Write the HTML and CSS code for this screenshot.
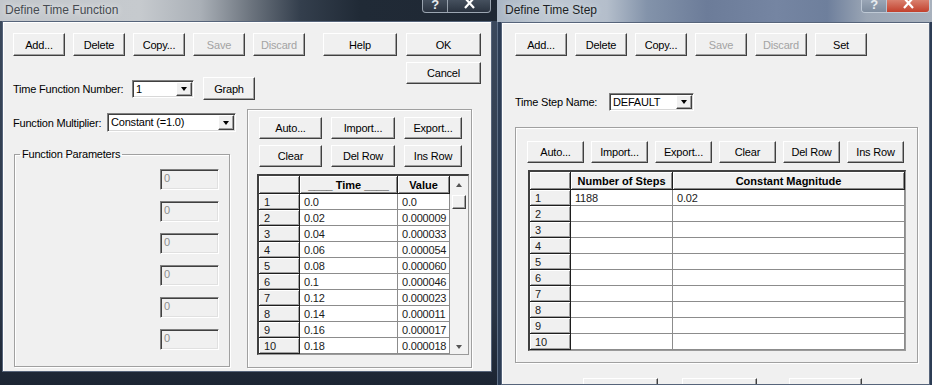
FILE: index.html
```html
<!DOCTYPE html>
<html lang="en">
<head>
  <meta charset="UTF-8">
  <meta name="viewport" content="width=device-width, initial-scale=1.0">
  <title>Define Time Function / Define Time Step</title>
  <link rel="stylesheet" href="styles.css">
</head>
<body>
<div class="desktop">

  <!-- Define Time Function dialog -->
  <div class="window win-function">
    <div class="titlebar">
      <span class="title">Define Time Function</span>
      <div class="caption">
        <span class="cap-btn cap-help">?</span>
        <span class="cap-btn cap-close">
          <svg width="11" height="9" viewBox="0 0 11 9"><path d="M1 -2 L10 8 M10 -2 L1 8" stroke="#fff" stroke-width="2.2"/></svg>
        </span>
      </div>
    </div>

    <div class="client fn-client">
      <div class="fn-top">
        <div class="fn-main">
          <div class="btn-row">
            <button class="btn">Add...</button>
            <button class="btn">Delete</button>
            <button class="btn">Copy...</button>
            <button class="btn" disabled>Save</button>
            <button class="btn" disabled>Discard</button>
            <button class="btn btn-help">Help</button>
          </div>
          <div class="field-row fn-number">
            <label class="lbl lbl-number">Time Function Number:</label>
            <div class="combo combo-number"><span class="combo-text">1</span><span class="combo-drop"></span></div>
            <button class="btn btn-graph">Graph</button>
          </div>
        </div>
        <div class="fn-side">
          <button class="btn btn-ok">OK</button>
          <button class="btn btn-ok btn-cancel">Cancel</button>
        </div>
      </div>

      <div class="fn-body">
        <div class="fn-left">
          <div class="field-row mult-row">
            <label class="lbl lbl-mult">Function Multiplier:</label>
            <div class="combo combo-mult"><span class="combo-text">Constant (=1.0)</span><span class="combo-drop"></span></div>
          </div>
          <fieldset class="group params">
            <legend>Function Parameters</legend>
            <div class="param">0</div>
            <div class="param">0</div>
            <div class="param">0</div>
            <div class="param">0</div>
            <div class="param">0</div>
            <div class="param">0</div>
          </fieldset>
        </div>

        <div class="group fn-table">
          <div class="tool-grid">
            <button class="btn">Auto...</button>
            <button class="btn">Import...</button>
            <button class="btn">Export...</button>
            <button class="btn">Clear</button>
            <button class="btn">Del Row</button>
            <button class="btn">Ins Row</button>
          </div>
          <div class="grid-frame fn-grid">
            <table class="grid">
              <colgroup><col style="width:41px"><col style="width:98px"><col style="width:52px"></colgroup>
              <tr><th></th><th>____ Time ____</th><th>Value</th></tr>
              <tr><td class="rh">1</td><td>0.0</td><td>0.0</td></tr>
              <tr><td class="rh">2</td><td>0.02</td><td>0.000009</td></tr>
              <tr><td class="rh">3</td><td>0.04</td><td>0.000033</td></tr>
              <tr><td class="rh">4</td><td>0.06</td><td>0.000054</td></tr>
              <tr><td class="rh">5</td><td>0.08</td><td>0.000060</td></tr>
              <tr><td class="rh">6</td><td>0.1</td><td>0.000046</td></tr>
              <tr><td class="rh">7</td><td>0.12</td><td>0.000023</td></tr>
              <tr><td class="rh">8</td><td>0.14</td><td>0.000011</td></tr>
              <tr><td class="rh">9</td><td>0.16</td><td>0.000017</td></tr>
              <tr><td class="rh">10</td><td>0.18</td><td>0.000018</td></tr>
            </table>
            <div class="vscroll">
              <span class="arrow-up"></span>
              <span class="thumb"></span>
              <span class="arrow-down"></span>
            </div>
          </div>
        </div>
      </div>
    </div>
  </div>

  <!-- Define Time Step dialog -->
  <div class="window win-step">
    <div class="titlebar">
      <span class="title">Define Time Step</span>
      <div class="caption">
        <span class="cap-btn cap-help">?</span>
        <span class="cap-btn cap-close">
          <svg width="11" height="9" viewBox="0 0 11 9"><path d="M1 -2 L10 8 M10 -2 L1 8" stroke="#fff" stroke-width="2.2"/></svg>
        </span>
      </div>
    </div>

    <div class="client step-client">
      <div class="btn-row">
        <button class="btn">Add...</button>
        <button class="btn">Delete</button>
        <button class="btn">Copy...</button>
        <button class="btn" disabled>Save</button>
        <button class="btn" disabled>Discard</button>
        <button class="btn">Set</button>
      </div>
      <div class="field-row name-row">
        <label class="lbl lbl-name">Time Step Name:</label>
        <div class="combo combo-name"><span class="combo-text">DEFAULT</span><span class="combo-drop"></span></div>
      </div>

      <div class="group step-group">
        <div class="tool-row">
          <button class="btn">Auto...</button>
          <button class="btn">Import...</button>
          <button class="btn">Export...</button>
          <button class="btn">Clear</button>
          <button class="btn">Del Row</button>
          <button class="btn">Ins Row</button>
        </div>
        <div class="grid-frame step-grid">
          <table class="grid">
            <colgroup><col style="width:41px"><col style="width:102px"><col style="width:232px"></colgroup>
            <tr><th></th><th>Number of Steps</th><th>Constant Magnitude</th></tr>
            <tr><td class="rh">1</td><td>1188</td><td>0.02</td></tr>
            <tr><td class="rh">2</td><td></td><td></td></tr>
            <tr><td class="rh">3</td><td></td><td></td></tr>
            <tr><td class="rh">4</td><td></td><td></td></tr>
            <tr><td class="rh">5</td><td></td><td></td></tr>
            <tr><td class="rh">6</td><td></td><td></td></tr>
            <tr><td class="rh">7</td><td></td><td></td></tr>
            <tr><td class="rh">8</td><td></td><td></td></tr>
            <tr><td class="rh">9</td><td></td><td></td></tr>
            <tr><td class="rh">10</td><td></td><td></td></tr>
          </table>
        </div>
      </div>

      <!-- dialog buttons, cut off by the bottom of the screen -->
      <div class="bottom-row">
        <button class="btn btn-ok"></button>
        <button class="btn btn-ok"></button>
        <button class="btn btn-ok"></button>
      </div>
    </div>
  </div>

</div>
</body>
</html>
```

FILE: styles.css
```css
* {
  box-sizing: border-box;
}

body {
  margin: 0;
  width: 932px;
  height: 385px;
  overflow: hidden;
  background: #1b2532;
  font-family: "Liberation Sans", Arial, sans-serif;
  font-size: 11px;
  letter-spacing: -0.2px;
  color: #000;
}

.desktop {
  display: flex;
  height: 385px;
}

/* Window frames */
.window {
  display: flex;
  flex-direction: column;
  height: 385px;
  overflow: hidden;
}

.win-function {
  width: 497px;
  background: linear-gradient(180deg, #3c4a5e 0%, #2a3546 80%, #1c2533 100%);
}

.win-step {
  width: 435px;
  background: linear-gradient(90deg, #8fa0b6 0, #2c3c54 1px, #2c3c54 100%);
}

.titlebar {
  display: flex;
  justify-content: space-between;
  align-items: flex-start;
  flex-shrink: 0;
}

.win-function .titlebar {
  height: 21px;
  padding-right: 6px;
  background: linear-gradient(90deg, #c3c7cc 0, #c6cace 140px, #aab0b7 200px, #6d757f 250px, #343f4d 300px, #202a36 360px, #1f2834 100%);
}

.win-step .titlebar {
  height: 22px;
  padding-right: 2px;
  background: linear-gradient(90deg, #aab6c4 0, #c0c9d3 50px, #b4becb 110px, #8393aa 150px, #6c7c99 210px, #7585a2 280px, #6e7f9c 330px, #9ba6b5 370px, #a8b1bd 100%);
}

.title {
  padding-top: 2px;
  font-size: 12px;
  letter-spacing: 0;
  line-height: 16px;
}

.win-function .title {
  padding-left: 5px;
  color: #464b51;
  text-shadow: 0 0 6px rgba(255, 255, 255, 0.9);
}

.win-step .title {
  padding-left: 8px;
  color: #1c1f24;
  text-shadow: 0 0 6px rgba(230, 238, 245, 0.9);
}

/* Caption buttons (top clipped by the screen edge) */
.caption {
  display: flex;
  height: 13px;
  border: 1px solid rgba(215, 225, 235, 0.6);
  border-top: none;
  border-radius: 0 0 4px 4px;
  overflow: hidden;
}

.cap-btn {
  display: flex;
  justify-content: center;
  align-items: flex-start;
  height: 12px;
  color: #e8ecf0;
  font-weight: bold;
  font-size: 13px;
  line-height: 9px;
}

.cap-help {
  width: 25px;
  border-right: 1px solid rgba(215, 225, 235, 0.6);
}

.cap-close {
  width: 42px;
}

.win-function .caption {
  background: linear-gradient(180deg, #45505e, #2a3340);
}

.win-step .cap-help {
  background: linear-gradient(180deg, #9aa6b6, #7e8c9e);
}

.win-step .cap-close {
  background: linear-gradient(180deg, #d9806e, #c2402c);
}

/* Client area */
.client {
  flex: 1;
  background: #f0f0f0;
  border: 1px solid #56647a;
  box-shadow: inset 1px 1px #ffffff;
  overflow: hidden;
}

.fn-client {
  margin: 0 5px 13px 2px;
  padding: 11px 0 0 10px;
}

.step-client {
  margin: 0 2px 0 4px;
  padding: 10px 0 0 13px;
}

/* Buttons */
.btn {
  display: block;
  height: 23px;
  width: 52px;
  padding: 0;
  margin: 0;
  font-family: inherit;
  font-size: 11px;
  letter-spacing: -0.2px;
  color: #000;
  background: #f0f0f0;
  border: 1px solid;
  border-color: #ffffff #404040 #404040 #ffffff;
  box-shadow: inset -1px -1px #a0a0a0;
  border-radius: 0;
}

.btn:disabled {
  color: #a3a3a3;
}

.btn-row {
  display: flex;
  gap: 8px;
}

.btn-help {
  width: 74px;
  margin-left: 10px;
}

.btn-ok {
  width: 75px;
}

.btn-cancel {
  height: 22px;
  margin-top: 6px;
}

.btn-graph {
  width: 52px;
  margin-left: 9px;
}

/* Labels and combos */
.field-row {
  display: flex;
  align-items: center;
}

.lbl {
  flex-shrink: 0;
}

.lbl-number {
  width: 119px;
}

.lbl-mult,
.lbl-name {
  width: 94px;
}

.combo {
  display: flex;
  height: 18px;
  padding: 1px;
  background: #fff;
  border: 1px solid;
  border-color: #808080 #ffffff #ffffff #808080;
  box-shadow: inset 1px 1px #404040, inset -1px -1px #d8d8d8;
}

.combo-text {
  flex: 1;
  padding-left: 2px;
  line-height: 14px;
  white-space: nowrap;
}

.combo-drop {
  display: flex;
  justify-content: center;
  align-items: center;
  width: 16px;
  background: #f0f0f0;
  border: 1px solid;
  border-color: #ffffff #404040 #404040 #ffffff;
  box-shadow: inset -1px -1px #a0a0a0;
}

.combo-drop::after {
  content: "";
  border-left: 3.5px solid transparent;
  border-right: 3.5px solid transparent;
  border-top: 4px solid #000;
}

.combo-number {
  width: 62px;
}

.combo-mult {
  width: 129px;
  height: 19px;
}

.combo-name {
  width: 85px;
}

/* Define Time Function layout */
.fn-top {
  display: flex;
  align-items: flex-start;
}

.fn-main {
  width: 384px;
}

.fn-number {
  margin-top: 21px;
}

.fn-side {
  margin-left: 9px;
}

.fn-body {
  display: flex;
  align-items: flex-start;
  margin-top: 9px;
}

.fn-left {
  width: 223px;
}

.mult-row {
  margin-top: 4px;
}

/* Group boxes */
.group {
  border: 1px solid #a0a0a0;
  box-shadow: inset 1px 1px #ffffff, 1px 1px #ffffff;
}

.params {
  display: flex;
  flex-direction: column;
  align-items: flex-end;
  gap: 11px;
  width: 216px;
  height: 219px;
  margin: 16px 0 0 1px;
  padding: 8px 10px 0 0;
  min-width: 0;
}

.params legend {
  margin-left: 5px;
  padding: 0 2px;
  line-height: 13px;
}

.param {
  width: 59px;
  height: 21px;
  padding-left: 3px;
  line-height: 17px;
  color: #8c8c8c;
  background: #f0f0f0;
  border: 1px solid;
  border-color: #808080 #ffffff #ffffff #808080;
  box-shadow: inset 1px 1px #404040, inset -1px -1px #e0e0e0;
}

.fn-table {
  width: 225px;
  height: 259px;
  margin-left: 11px;
  padding: 7px 0 0 11px;
}

.tool-grid {
  display: grid;
  grid-template-columns: 63px 64px 58px;
  column-gap: 9px;
  row-gap: 6px;
}

.tool-grid .btn {
  width: auto;
  height: 22px;
}

/* Grids */
.grid-frame {
  display: flex;
  background: #ffffff;
  border-style: solid;
  border-width: 2px 1px 1px 2px;
  border-color: #404040 #9a9a9a #9a9a9a #404040;
}

.fn-grid {
  width: 212px;
  height: 181px;
  margin: 7px 0 0 -2px;
}

.grid {
  border-collapse: separate;
  border-spacing: 0;
  table-layout: fixed;
  font-size: 11px;
}

.grid tr {
  height: 16px;
}

.grid tr:first-child {
  height: 18px;
}

.grid th {
  padding: 0;
  font-weight: bold;
  letter-spacing: 0;
  text-align: center;
  background: #f0f0f0;
  border-right: 1px solid #1e1e1e;
  border-bottom: 1px solid #1e1e1e;
  box-shadow: inset 1px 1px #ffffff, inset -1px -1px #8a8a8a;
  white-space: nowrap;
  overflow: hidden;
}

.grid td {
  padding: 0 0 0 4px;
  line-height: 14px;
  color: #1a1a1a;
  background: #ffffff;
  border-right: 1px solid #8c8c8c;
  border-bottom: 1px solid #8c8c8c;
  white-space: nowrap;
  overflow: hidden;
}

.grid td.rh {
  padding-left: 5px;
  background: #f0f0f0;
  border-right: 1px solid #1e1e1e;
  border-bottom: 1px solid #1e1e1e;
  box-shadow: inset 1px 1px #ffffff, inset -1px -1px #a0a0a0;
}

.fn-grid .grid {
  width: 191px;
}

.vscroll {
  display: flex;
  flex-direction: column;
  align-items: center;
  width: 18px;
  background: #f2f2f2;
}

.arrow-up {
  margin-top: 7px;
  border-left: 3px solid transparent;
  border-right: 3px solid transparent;
  border-bottom: 4px solid #555;
}

.thumb {
  width: 14px;
  height: 14px;
  margin-top: 8px;
  background: #f0f0f0;
  border: 1px solid;
  border-color: #ffffff #404040 #404040 #ffffff;
  box-shadow: inset -1px -1px #a0a0a0;
}

.arrow-down {
  margin-top: auto;
  margin-bottom: 5px;
  border-left: 3px solid transparent;
  border-right: 3px solid transparent;
  border-top: 4px solid #555;
}

/* Define Time Step layout */
.name-row {
  margin-top: 37px;
}

.step-group {
  width: 403px;
  height: 236px;
  margin-top: 16px;
  padding: 13px 0 0 11px;
}

.tool-row {
  display: flex;
  gap: 7px;
}

.tool-row .btn {
  width: 57px;
  height: 22px;
}

.step-grid {
  width: 378px;
  height: 181px;
  margin: 7px 0 0 1px;
}

.step-grid .grid {
  width: 375px;
}

.bottom-row {
  display: flex;
  margin: 15px 0 0 68px;
}

.bottom-row .btn:nth-child(2) {
  margin-left: 24px;
}

.bottom-row .btn:nth-child(3) {
  width: 73px;
  margin-left: 32px;
}
```
